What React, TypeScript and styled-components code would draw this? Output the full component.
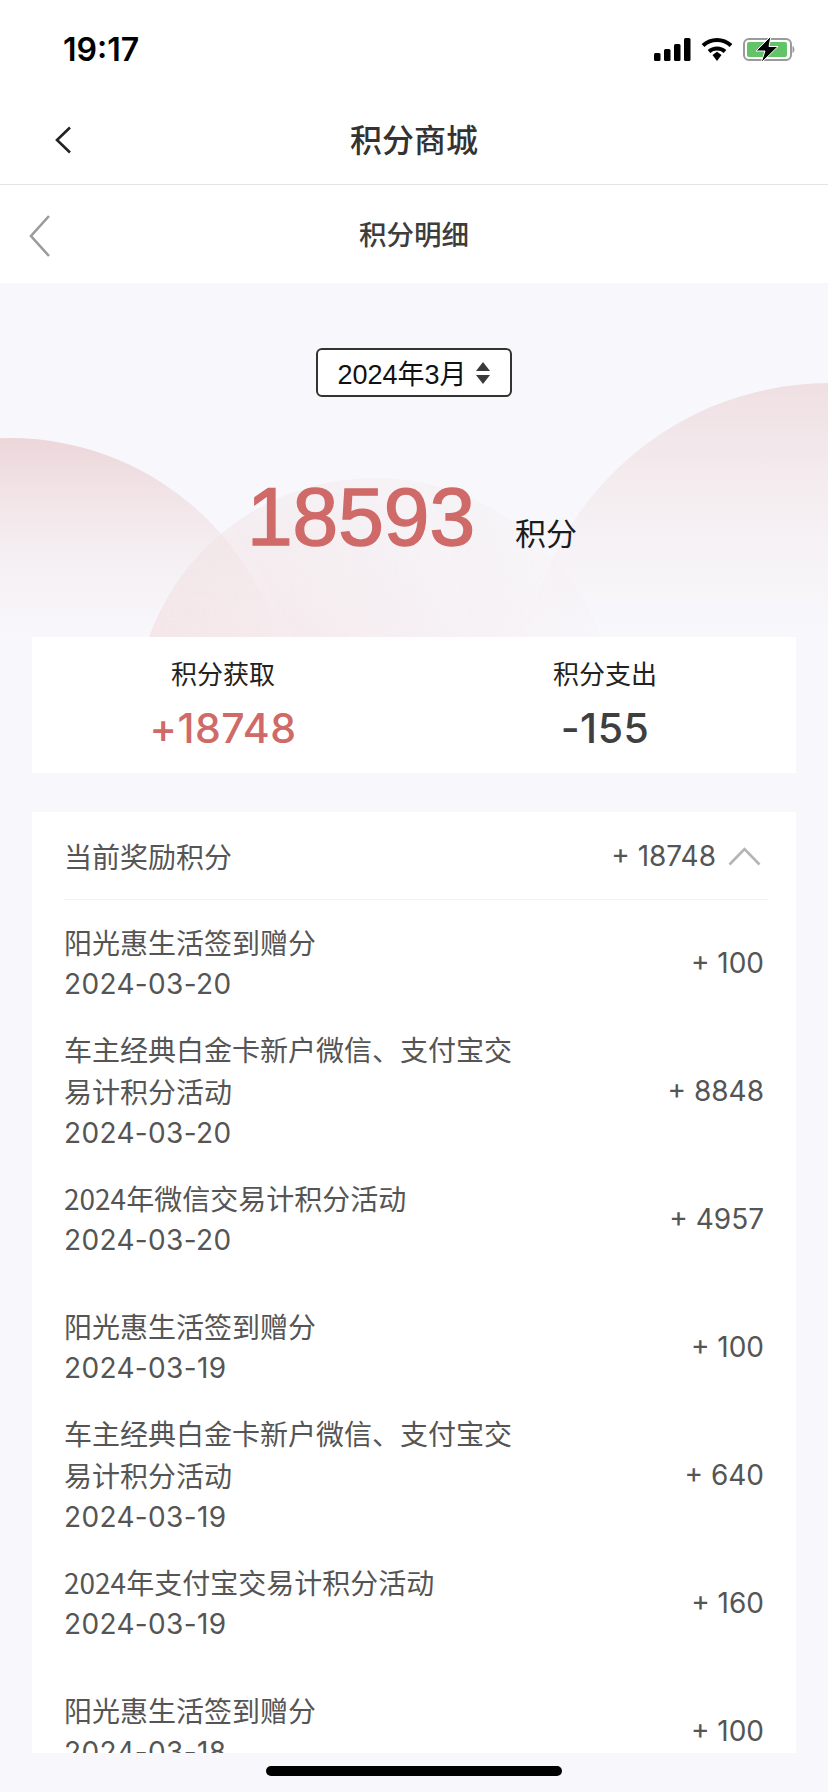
import React from 'react';
import styled, {createGlobalStyle} from 'styled-components';

const CJK = `"Noto Sans CJK SC", sans-serif`;
const LATIN = `"Liberation Sans", "Noto Sans CJK SC", sans-serif`;
const UI = `Inter, "Noto Sans CJK SC", sans-serif`;

const GlobalStyle = createGlobalStyle`
  html, body {
    margin: 0;
    padding: 0;
    background: #f8f8fc;
  }
  * {
    box-sizing: border-box;
  }
`

type Record = { title: string; date: string; amount: string };

const groups: Record[][] = [
    [
        {title: '阳光惠生活签到赠分', date: '2024-03-20', amount: '+ 100'},
        {title: '车主经典白金卡新户微信、支付宝交易计积分活动', date: '2024-03-20', amount: '+ 8848'},
        {title: '2024年微信交易计积分活动', date: '2024-03-20', amount: '+ 4957'},
    ],
    [
        {title: '阳光惠生活签到赠分', date: '2024-03-19', amount: '+ 100'},
        {title: '车主经典白金卡新户微信、支付宝交易计积分活动', date: '2024-03-19', amount: '+ 640'},
        {title: '2024年支付宝交易计积分活动', date: '2024-03-19', amount: '+ 160'},
    ],
    [
        {title: '阳光惠生活签到赠分', date: '2024-03-18', amount: '+ 100'},
    ],
];

const StatusBar = () => (
    <StyledStatusBar>
        <Time>19:17</Time>
        <StatusIcons>
            <svg width="37" height="23" viewBox="0 0 37 23">
                <rect x="0" y="15" width="6.5" height="8" rx="1.5" fill="#000"/>
                <rect x="10" y="11" width="6.5" height="12" rx="1.5" fill="#000"/>
                <rect x="20" y="6" width="6.5" height="17" rx="1.5" fill="#000"/>
                <rect x="30" y="0" width="6.5" height="23" rx="1.5" fill="#000"/>
            </svg>
            <svg width="32" height="25" viewBox="0 0 32 25">
                <path d="M2 8.5C10 1 22 1 30 8.5" fill="none" stroke="#000" strokeWidth="4"/>
                <path d="M8 14.5C12.5 10.5 19.5 10.5 24 14.5" fill="none" stroke="#000" strokeWidth="4"/>
                <path d="M11.5 18L16 14.8L20.5 18L16 24Z" fill="#000"/>
            </svg>
            <svg width="53" height="27" viewBox="0 0 53 27">
                <rect x="1" y="3" width="47" height="21" rx="5" fill="none" stroke="#9a9a9a" strokeWidth="2"/>
                <rect x="4" y="6" width="40" height="15" rx="2" fill="#62c466"/>
                <path d="M49.5 10C52 10.5 52 16.5 49.5 17Z" fill="#9a9a9a"/>
                <path d="M28 0L13 15H22L18 27L35 10.5H26Z" fill="#000" stroke="#fff" strokeWidth="1"/>
            </svg>
        </StatusIcons>
    </StyledStatusBar>
);

const RecordRow = ({title, date, amount}: Record) => (
    <Row>
        <RowText>
            <RowTitle>{title}</RowTitle>
            <RowDate>{date}</RowDate>
        </RowText>
        <RowAmount>{amount}</RowAmount>
    </Row>
);

export default function App() {
    return (
        <Page>
            <GlobalStyle/>
            <StatusBar/>
            <NavBar>
                <NavBack width="18" height="28" viewBox="0 0 18 28">
                    <path d="M16 1.5L3 14L16 26.5" fill="none" stroke="#222" strokeWidth="2.6"/>
                </NavBack>
                <NavTitle>积分商城</NavTitle>
            </NavBar>
            <SubHeader>
                <SubBack width="22" height="42" viewBox="0 0 22 42">
                    <path d="M20 1L2 21L20 41" fill="none" stroke="#9b9b9b" strokeWidth="2.6"/>
                </SubBack>
                <SubTitle>积分明细</SubTitle>
            </SubHeader>
            <Hero>
                <HeroArt viewBox="0 0 828 354" width="828" height="354">
                    <defs>
                        <linearGradient id="arcLeft" x1="0" y1="155" x2="0" y2="354" gradientUnits="userSpaceOnUse">
                            <stop offset="0" stopColor="#ecd6d9"/>
                            <stop offset="1" stopColor="#f8f4f7" stopOpacity="0.3"/>
                        </linearGradient>
                        <linearGradient id="arcMid" x1="0" y1="195" x2="0" y2="354" gradientUnits="userSpaceOnUse">
                            <stop offset="0" stopColor="#f0e4e6" stopOpacity="0.55"/>
                            <stop offset="1" stopColor="#f3dfe1" stopOpacity="0.7"/>
                        </linearGradient>
                        <linearGradient id="arcRight" x1="0" y1="100" x2="0" y2="354" gradientUnits="userSpaceOnUse">
                            <stop offset="0" stopColor="#efdfe2"/>
                            <stop offset="1" stopColor="#f8f6f9" stopOpacity="0.4"/>
                        </linearGradient>
                        <linearGradient id="fadeMid" x1="150" y1="0" x2="600" y2="0" gradientUnits="userSpaceOnUse">
                            <stop offset="0" stopColor="#fff"/>
                            <stop offset="0.45" stopColor="#fff" stopOpacity="0.6"/>
                            <stop offset="1" stopColor="#fff" stopOpacity="0.1"/>
                        </linearGradient>
                        <mask id="maskMid">
                            <rect x="0" y="0" width="828" height="354" fill="url(#fadeMid)"/>
                        </mask>
                    </defs>
                    <circle cx="10" cy="435" r="280" fill="url(#arcLeft)"/>
                    <circle cx="375" cy="435" r="240" fill="url(#arcMid)" mask="url(#maskMid)"/>
                    <circle cx="830" cy="407" r="307" fill="url(#arcRight)"/>
                </HeroArt>
                <MonthSelect>
                    <MonthLabel>2024年3月</MonthLabel>
                    <svg width="16" height="22" viewBox="0 0 16 22">
                        <path d="M8 0L15 9H1Z" fill="#3a3a3a"/>
                        <path d="M1 13H15L8 22Z" fill="#3a3a3a"/>
                    </svg>
                </MonthSelect>
                <Balance>
                    <BalanceValue>18593</BalanceValue>
                    <BalanceUnit>积分</BalanceUnit>
                </Balance>
            </Hero>
            <SummaryCard>
                <SummaryColumn>
                    <SummaryLabel>积分获取</SummaryLabel>
                    <SummaryValue $accent>+18748</SummaryValue>
                </SummaryColumn>
                <SummaryColumn>
                    <SummaryLabel>积分支出</SummaryLabel>
                    <SummaryValue>-155</SummaryValue>
                </SummaryColumn>
            </SummaryCard>
            <ListCard>
                <ListHeader>
                    <ListHeaderTitle>当前奖励积分</ListHeaderTitle>
                    <ListHeaderRight>
                        <HeaderAmount>+ 18748</HeaderAmount>
                        <svg width="33" height="20" viewBox="0 0 33 20">
                            <path d="M1.5 18.5L16.5 3L31.5 18.5" fill="none" stroke="#b4b4b4" strokeWidth="2.6"/>
                        </svg>
                    </ListHeaderRight>
                </ListHeader>
                <Groups>
                    {groups.map((group, i) => (
                        <Group key={i}>
                            {group.map((item, j) => <RecordRow key={j} {...item}/>)}
                        </Group>
                    ))}
                </Groups>
            </ListCard>
            <HomeArea>
                <HomeIndicator/>
            </HomeArea>
        </Page>
    );
}

const Page = styled.div`
  width: 828px;
  height: 1792px;
  overflow: hidden;
  display: flex;
  flex-direction: column;
  background: #f8f8fc;
  font-family: ${CJK};
`
const StyledStatusBar = styled.header`
  height: 100px;
  flex: none;
  background: #fff;
  display: flex;
  align-items: center;
  justify-content: space-between;
  padding: 0 32px 2px 63px;
`
const Time = styled.span`
  font-family: ${UI};
  font-size: 32px;
  font-weight: 600;
  color: #000;
`
const StatusIcons = styled.div`
  display: flex;
  align-items: center;
  gap: 10px;
`
const NavBar = styled.nav`
  height: 85px;
  flex: none;
  background: #fff;
  border-bottom: 1px solid #e4e4e4;
  display: flex;
  align-items: center;
  justify-content: center;
  padding-bottom: 8px;
  position: relative;
`
const NavBack = styled.svg`
  position: absolute;
  left: 54px;
  top: 26px;
`
const NavTitle = styled.h1`
  margin: 0;
  font-size: 32px;
  font-weight: 500;
  color: #333;
`
const SubHeader = styled.div`
  height: 98px;
  flex: none;
  background: #fff;
  display: flex;
  align-items: center;
  justify-content: center;
  padding-bottom: 2px;
  position: relative;
`
const SubBack = styled.svg`
  position: absolute;
  left: 29px;
  top: 30px;
`
const SubTitle = styled.h2`
  margin: 0;
  font-size: 27.5px;
  font-weight: 500;
  color: #3d3d3d;
`
const Hero = styled.section`
  height: 354px;
  flex: none;
  position: relative;
  overflow: hidden;
  display: flex;
  flex-direction: column;
  align-items: center;
  padding-top: 65px;
`
const HeroArt = styled.svg`
  position: absolute;
  left: 0;
  top: 0;
`
const MonthSelect = styled.div`
  position: relative;
  width: 196px;
  height: 49px;
  border: 2px solid #333;
  border-radius: 6px;
  background: #fff;
  display: flex;
  align-items: center;
  justify-content: center;
  gap: 8px;
`
const MonthLabel = styled.span`
  font-family: ${LATIN};
  font-size: 27px;
  color: #111;
`
const Balance = styled.div`
  position: relative;
  display: flex;
  align-items: baseline;
  margin-top: 72px;
  margin-left: -4px;
`
const BalanceValue = styled.span`
  font-family: ${LATIN};
  font-size: 82px;
  line-height: 96px;
  color: #cf6a68;
  -webkit-text-stroke: 1.5px #cf6a68;
`
const BalanceUnit = styled.span`
  margin-left: 40px;
  font-size: 31px;
  color: #1c1c1c;
`
const SummaryCard = styled.section`
  flex: none;
  width: 764px;
  height: 136px;
  margin: 0 32px;
  background: #fff;
  display: grid;
  grid-template-columns: 1fr 1fr;
`
const SummaryColumn = styled.div`
  display: flex;
  flex-direction: column;
  align-items: center;
  padding-top: 18px;
`
const SummaryLabel = styled.span`
  font-size: 26px;
  line-height: 36px;
  color: #222;
`
const SummaryValue = styled.span<{ $accent?: boolean }>`
  margin-top: 13px;
  font-family: ${UI};
  font-size: 41px;
  line-height: 48px;
  font-weight: 500;
  letter-spacing: 0.5px;
  color: ${p => p.$accent ? '#cf6a68' : '#3f3f3f'};
`
const ListCard = styled.section`
  flex: none;
  width: 764px;
  height: 941px;
  margin: 39px 32px 0;
  padding: 0 28px 0 32px;
  background: #fff;
  overflow: hidden;
`
const ListHeader = styled.div`
  height: 88px;
  display: flex;
  align-items: center;
  justify-content: space-between;
  border-bottom: 1px solid #f3f3f3;
  padding-right: 7px;
`
const ListHeaderTitle = styled.span`
  font-size: 28px;
  color: #555;
`
const ListHeaderRight = styled.div`
  display: flex;
  align-items: center;
  gap: 12px;
`
const HeaderAmount = styled.span`
  font-family: ${UI};
  font-size: 28px;
  color: #555;
`
const Groups = styled.div`
  display: flex;
  flex-direction: column;
  gap: 44px;
  padding-top: 21px;
`
const Group = styled.div`
  display: flex;
  flex-direction: column;
  gap: 23px;
`
const Row = styled.div`
  display: flex;
  align-items: center;
  justify-content: space-between;
  padding-right: 4px;
`
const RowText = styled.div`
  width: 452px;
`
const RowTitle = styled.div`
  font-size: 28px;
  line-height: 42px;
  color: #555;
`
const RowDate = styled.div`
  font-family: ${UI};
  font-size: 28px;
  line-height: 42px;
  letter-spacing: 0.35px;
  color: #555;
`
const RowAmount = styled.span`
  font-family: ${UI};
  font-size: 28px;
  color: #555;
`
const HomeArea = styled.footer`
  flex: 1;
  padding-top: 13px;
  display: flex;
  justify-content: center;
`
const HomeIndicator = styled.div`
  width: 296px;
  height: 10px;
  border-radius: 5px;
  background: #000;
`
